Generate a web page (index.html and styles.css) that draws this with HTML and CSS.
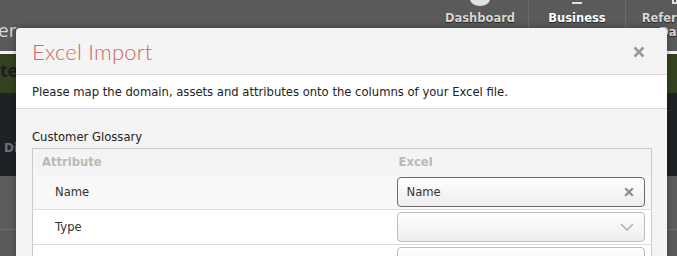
FILE: index.html
```html
<!DOCTYPE html>
<html lang="en">

<head>
  <meta charset="UTF-8">
  <title>Excel Import</title>
  <link rel="stylesheet" href="styles.css">
</head>

<body>
  <div class="page">
    <div class="topbar">
      <span class="brand">er</span>
      <nav class="nav">
        <div class="nav-item">
          <span class="nav-icon circle"></span>
          <span>Dashboard</span>
        </div>
        <div class="nav-item active">
          <span class="nav-icon search"></span>
          <span>Business</span>
        </div>
        <div class="nav-item last">
          <span class="nav-icon doc"></span>
          <span>Reference</span>
          <span class="sub">Data</span>
        </div>
      </nav>
    </div>
    <div class="greenbar"><span>ter</span></div>
    <div class="darkbar"><span>Di</span></div>
    <div class="graybar"></div>
  </div>

  <div class="modal">
    <div class="modal-header">
      <h1>Excel Import</h1>
      <svg class="close" width="12" height="12" viewBox="0 0 12 12">
        <path d="M1.5 1.5 L10.5 10.5 M10.5 1.5 L1.5 10.5" stroke="#999" stroke-width="2.6" />
      </svg>
    </div>
    <div class="modal-intro">
      Please map the domain, assets and attributes onto the columns of your Excel file.
    </div>
    <div class="modal-body">
      <div class="section-title">Customer Glossary</div>
      <table class="mapping">
        <thead>
          <tr>
            <th>Attribute</th>
            <th>Excel</th>
          </tr>
        </thead>
        <tbody>
          <tr class="alt">
            <td class="attr">Name</td>
            <td>
              <div class="select chosen">
                <span>Name</span>
                <svg class="clear" width="10" height="10" viewBox="0 0 10 10">
                  <path d="M1.2 1.2 L8.8 8.8 M8.8 1.2 L1.2 8.8" stroke="#8c8c8c" stroke-width="2.3" />
                </svg>
              </div>
            </td>
          </tr>
          <tr>
            <td class="attr">Type</td>
            <td>
              <div class="select">
                <span></span>
                <svg class="chevron" width="14" height="8" viewBox="0 0 14 8">
                  <path d="M1 1 L7 7 L13 1" fill="none" stroke="#a8a8a8" stroke-width="1.3" />
                </svg>
              </div>
            </td>
          </tr>
          <tr>
            <td class="attr"></td>
            <td>
              <div class="select"></div>
            </td>
          </tr>
        </tbody>
      </table>
    </div>
  </div>
</body>

</html>
```

FILE: styles.css
```css
* {
  box-sizing: border-box;
}

html,
body {
  overflow: hidden;
}

body {
  margin: 0;
  height: 256px;
  font-family: 'DejaVu Sans', Verdana, sans-serif;
  background-color: #5b5b5b;
}

.page {
  display: flex;
  flex-direction: column;
  overflow: hidden;
}

.topbar {
  height: 54px;
  display: flex;
  justify-content: space-between;
  background-color: #5a5a5a;
  border-bottom: 3px solid #f2f2f2;
}

.brand {
  margin-top: 17px;
  font-family: 'Open Sans', sans-serif;
  font-size: 19px;
  color: #d8d8d8;
  margin-left: -2px;
}

.nav {
  display: flex;
  margin-right: -46px;
}

.nav-item {
  position: relative;
  width: 97px;
  display: flex;
  flex-direction: column;
  align-items: center;
  padding-top: 11px;
  font-weight: bold;
  font-size: 11.5px;
  line-height: 14px;
  color: #d6d6d6;
  text-shadow: 0 1px 1px #222;
  border-right: 1px solid #6a6a6a;
}

.nav-item.active {
  color: #ffffff;
}

.nav-item.last {
  border-right: none;
}

.nav-icon {
  position: absolute;
  top: -8px;
}

.nav-icon.circle {
  width: 20px;
  height: 14px;
  border-radius: 50%;
  background-color: #e0e0e0;
}

.nav-icon.search {
  width: 10px;
  height: 6px;
  top: -2px;
  border-bottom: 2px solid #e0e0e0;
}

.nav-icon.doc {
  width: 6px;
  height: 12px;
  border: 2px solid #e0e0e0;
}

.greenbar {
  height: 39px;
  background-color: #33421f;
  font-family: 'Open Sans', sans-serif;
  font-weight: bold;
  font-size: 17px;
  color: #1c1c1c;
  padding-top: 5px;
}

.darkbar {
  height: 83px;
  background-color: #1e2227;
  font-weight: bold;
  font-size: 12px;
  color: #6e7276;
  padding: 48px 0 0 4px;
}

.graybar {
  height: 54px;
  background-color: #5c5c5c;
  border-bottom: 1px solid #6c6c6c;
}

.modal {
  position: absolute;
  left: 16px;
  top: 28px;
  width: 651px;
  height: 240px;
  background-color: #f4f4f4;
  border-radius: 4px 4px 0 0;
  box-shadow: 0 0 6px rgba(0, 0, 0, 0.35);
  overflow: hidden;
}

.modal-header {
  height: 47px;
  display: flex;
  align-items: center;
  justify-content: space-between;
  padding: 0 22px 0 16px;
  border-bottom: 1px solid #dadada;
}

.modal-header h1 {
  margin: 0;
  font-family: 'Lato', sans-serif;
  font-weight: 300;
  font-size: 22px;
  color: #d0695a;
  letter-spacing: 0.2px;
}

.close {
  margin-top: 2px;
}

.modal-intro {
  height: 34px;
  display: flex;
  align-items: center;
  padding-left: 16px;
  background-color: #ffffff;
  border-bottom: 1px solid #dadada;
  font-size: 11.6px;
  color: #222;
}

.modal-body {
  padding: 21px 16px 0 16px;
}

.section-title {
  font-size: 11.6px;
  color: #222;
  margin-bottom: 4px;
}

.mapping {
  width: 620px;
  border-collapse: collapse;
  border: 1px solid #c9c9c9;
  font-size: 11.6px;
  color: #333;
}

.mapping th {
  height: 26px;
  text-align: left;
  font-weight: bold;
  color: #b9b9b9;
  padding: 0 9px;
}

.mapping th:last-child {
  padding-left: 2px;
}

.mapping td {
  height: 35px;
  border-bottom: 1px solid #dcdcdc;
  background-color: #ffffff;
  padding: 0;
}

.mapping tr.alt td {
  background-color: #f8f8f8;
}

.mapping td.attr {
  width: 364px;
  padding-left: 22px;
}

.mapping td:last-child {
  padding-right: 6px;
}

.select {
  height: 30px;
  width: 248px;
  display: flex;
  align-items: center;
  justify-content: space-between;
  padding: 0 9px 0 9px;
  border: 1px solid #bdbdbd;
  border-radius: 4px;
  background: linear-gradient(#ffffff, #ededed);
  color: #333;
}

.select.chosen {
  border-color: #6a6a6a;
}

.clear {
  margin-right: 1px;
}

.chevron {
  margin-right: 1px;
}
```
